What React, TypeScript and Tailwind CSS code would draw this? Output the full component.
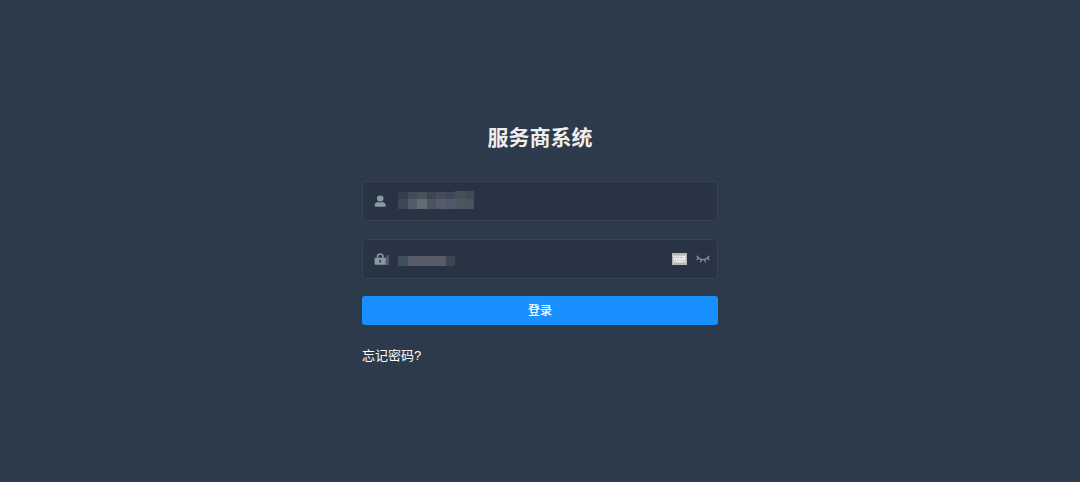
import { useState } from "react";
import type { FormEvent } from "react";

const FONT = "font-['Liberation_Sans','Noto_Sans_CJK_SC',sans-serif]";

// Masked values, one colour per tile
const ACCOUNT_TOP = ["#333e4d", "#424b59", "#48505c", "#3b4553", "#444c5a", "#3e4855", "#474f58", "#414b58"];
const ACCOUNT_BOTTOM = ["#3e4755", "#545c69", "#626b72", "#4b5463", "#575a68", "#4e5a69", "#4e5660", "#4a5460"];
const PASSWORD = ["#424e5d", "#585c69", "#585c69", "#585c69", "#585c69", "#3c4652"];

function UserIcon() {
  return (
    <svg viewBox="0 0 12 12" className="h-3 w-3" fill="currentColor" aria-hidden="true">
      <ellipse cx="6.2" cy="3.5" rx="3.3" ry="3" />
      <path d="M.6 10.6C.6 8.400 2 7.300 4 7c1.400.6 3 .6 4.400 0 2 .3 3.400 1.400 3.400 3.600 0 .8-.4 1.200-1.100 1.200H1.700C1 11.800.6 11.400.6 10.600z" />
    </svg>
  );
}

function LockIcon() {
  return (
    <svg viewBox="0 0 16 12" className="h-3 w-4" aria-hidden="true">
      <path d="M13 2h2v10h-4V5z" fill="#4d5b69" />
      <path d="M3.5 5V3.6a2.7 2.7 0 0 1 5.400 0V5" fill="none" stroke="currentColor" strokeWidth="1.5" />
      <rect x="0.6" y="4.8" width="11" height="7" rx="0.8" fill="currentColor" />
      <path d="M6.200 6.700a1 1 0 0 1 .6 1.700V10H5.600V8.400a1 1 0 0 1 .6-1.700z" fill="#283443" />
    </svg>
  );
}

function KeyboardIcon() {
  return (
    <svg viewBox="0 0 15 12" className="h-3 w-[15px]" aria-hidden="true">
      <rect width="15" height="12" fill="#b8b8b8" />
      <rect x="1" y="2" width="13" height="8" fill="#cccccc" />
      <g fill="#f5f5f5">
        <path d="M2 3h2v1H2zM5 3h1v1H5zM7 3h2v1H7zM10 3h3v1h-3z" />
        <path d="M2 5h1v1H2zM4 5h2v1H4zM7 5h1v1H7zM9 5h2v1H9zM12 4h1v2h-1z" />
        <path d="M2 6h3v1H2zM6 6h3v1H6zM10 6h3v1h-3z" />
        <path d="M2 8h1v1H2zM4 8h7v1H4zM12 8h1v1h-1z" />
      </g>
    </svg>
  );
}

function ClosedEyeIcon() {
  return (
    <svg
      viewBox="0 0 14 8"
      className="h-2 w-3.5"
      fill="none"
      stroke="currentColor"
      strokeWidth="1.2"
      strokeLinecap="round"
      aria-hidden="true"
    >
      <path d="M1 1.200C2.600 3.600 4.600 4.700 7 4.700s4.400-1.100 6-3.500" />
      <path d="M2.600 3.200L1 4.500M5.200 4.500L4.600 6.800M8.800 4.500l.6 2.300M11.400 3.200L13 4.500" />
    </svg>
  );
}

function Login() {
  const [account, setAccount] = useState("");
  const [password, setPassword] = useState("");
  const [visible, setVisible] = useState(false);

  const onSubmit = (e: FormEvent) => {
    e.preventDefault();
  };

  return (
    <form onSubmit={onSubmit} className="mx-auto w-full max-w-[356px]">
      <h1 className="text-center text-[21px] leading-[30px] font-bold text-[#eeeeee]">服务商系统</h1>

      {/* Account */}
      <div className="relative mt-7 flex h-10 items-center rounded border border-[#37434f] bg-[#283443]">
        <label htmlFor="account" aria-label="账号" className="shrink-0 pl-[11px] text-[#889aa4]">
          <UserIcon />
        </label>
        <input
          id="account"
          type="text"
          value={account}
          onChange={(e) => setAccount(e.target.value)}
          className="ml-3 h-full min-w-0 flex-1 bg-transparent text-[13px] text-white caret-white outline-none"
        />
        {!account && (
          <svg
            viewBox="0 0 76 18"
            shapeRendering="crispEdges"
            className="pointer-events-none absolute top-[9px] left-[35px] h-[18px] w-[76px]"
            aria-hidden="true"
          >
            {ACCOUNT_TOP.map((fill, i) => (
              <rect key={i} x={i * 9.5} y={i < 6 ? 1 : 0} width="9.5" height={i < 6 ? 7 : 8} fill={fill} />
            ))}
            {ACCOUNT_BOTTOM.map((fill, i) => (
              <rect key={i} x={i * 9.5} y="8" width="9.5" height="10" fill={fill} />
            ))}
          </svg>
        )}
      </div>

      {/* Password */}
      <div className="relative mt-[18px] flex h-10 items-center rounded border border-[#37434f] bg-[#283443]">
        <label htmlFor="password" aria-label="密码" className="shrink-0 pl-[11px] text-[#889aa4]">
          <LockIcon />
        </label>
        <input
          id="password"
          type={visible ? "text" : "password"}
          value={password}
          onChange={(e) => setPassword(e.target.value)}
          className="ml-2 h-full min-w-0 flex-1 bg-transparent text-[13px] text-white caret-white outline-none"
        />
        {!password && (
          <svg
            viewBox="0 0 57 10"
            shapeRendering="crispEdges"
            className="pointer-events-none absolute top-4 left-[35px] h-2.5 w-[57px]"
            aria-hidden="true"
          >
            {PASSWORD.map((fill, i) => (
              <rect key={i} x={i * 9.5} y="0" width="9.5" height="10" fill={fill} />
            ))}
          </svg>
        )}
        <button type="button" aria-label="键盘" className="shrink-0">
          <KeyboardIcon />
        </button>
        <button
          type="button"
          aria-label="显示密码"
          onClick={() => setVisible((v) => !v)}
          className="mr-[7px] ml-[9px] shrink-0 text-[#889aa4]"
        >
          <ClosedEyeIcon />
        </button>
      </div>

      <button
        type="submit"
        className="mt-[17px] flex h-[29px] w-full items-center justify-center rounded-[3px] bg-[#1890ff] text-[12px] font-medium text-white"
      >
        登录
      </button>

      <a href="#" className="mt-5 inline-block text-[13px] leading-[22px] text-white">
        忘记密码?
      </a>
    </form>
  );
}

export default function App() {
  return (
    <main className={`min-h-screen bg-[#2d3a4b] px-4 pt-[123px] ${FONT}`}>
      <Login />
    </main>
  );
}
